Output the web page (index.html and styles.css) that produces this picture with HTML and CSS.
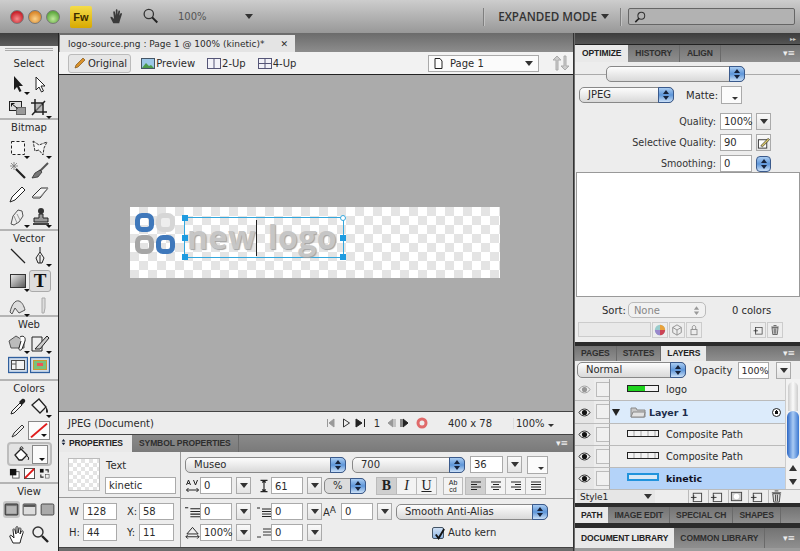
FILE: index.html
```html
<!DOCTYPE html>
<html lang="en">
  <head>
    <title>Fireworks - logo-source.png</title>
    <meta charset="UTF-8" />
    <link rel="stylesheet" href="styles.css">
  </head>
  <body>
    <svg class="defs" width="0" height="0">
      <symbol id="i-arrow" viewBox="0 0 20 20"><path d="M6 2v14l3-3 2.500 5 2-1-2.500-5H15z" fill="#1c1c1c"/></symbol>
      <symbol id="i-subsel" viewBox="0 0 20 20"><path d="M6 3v13l3-3 2.500 5 2-1-2.500-5H15z" fill="#fff" stroke="#222"/></symbol>
      <symbol id="i-scale" viewBox="0 0 20 20"><rect x="1.500" y="3.500" width="12" height="9" fill="#ddd" stroke="#222"/><rect x="8.500" y="9.500" width="9" height="7" fill="#999" stroke="#666"/><path d="M3.500 5.500l6 5M3.500 5.500h3M3.500 5.500v3" fill="none" stroke="#111"/></symbol>
      <symbol id="i-crop" viewBox="0 0 20 20"><path d="M5 1v13h12M1 5h12v12M2 17L15 3" fill="none" stroke="#222" stroke-width="1.500"/><rect x="6" y="6" width="6" height="7" fill="#999" opacity=".6"/></symbol>
      <symbol id="i-marquee" viewBox="0 0 20 20"><rect x="3.500" y="3.500" width="13" height="13" fill="#f6f6f6" stroke="#222" stroke-dasharray="3 2"/></symbol>
      <symbol id="i-lasso" viewBox="0 0 20 20"><path d="M3 3l6 4 8-3-3 6-1 7-4-5-4 1z" fill="#f6f6f6" stroke="#333" stroke-dasharray="3 1"/></symbol>
      <symbol id="i-wand" viewBox="0 0 20 20"><path d="M8 8l9 9" stroke="#222" stroke-width="2.200"/><path d="M6 1v8M2 5h8M3 2l6 6M9 2L3 8" stroke="#777" stroke-width=".8"/></symbol>
      <symbol id="i-brush" viewBox="0 0 20 20"><path d="M18 2L9 11" stroke="#555" stroke-width="2"/><path d="M10 9l2 2-4 5-6 1 3-5z" fill="#777" stroke="#222" stroke-width=".7"/></symbol>
      <symbol id="i-pencil" viewBox="0 0 20 20"><path d="M14 3l3 3-10 10-5 2 2-5z" fill="#fff" stroke="#222"/></symbol>
      <symbol id="i-eraser" viewBox="0 0 20 20"><path d="M2 13l9-9h7l-8 10H3z" fill="#f4f4f4" stroke="#333"/><path d="M2 13h8l8-9" fill="none" stroke="#888"/></symbol>
      <symbol id="i-blur" viewBox="0 0 20 20"><path d="M3 17l2-8 5-6 4 1 1 5-4 6-5 3z" fill="#eee" stroke="#555"/><path d="M6 9l3 7M9 7l3 6" stroke="#999"/></symbol>
      <symbol id="i-stamp" viewBox="0 0 20 20"><circle cx="11" cy="4" r="3" fill="#333"/><path d="M9 7h4v4h5v4H4v-4h5z" fill="#999" stroke="#222"/><rect x="3" y="16" width="16" height="2" fill="#444"/></symbol>
      <symbol id="i-line" viewBox="0 0 20 20"><path d="M3 3l14 14" stroke="#222" stroke-width="1.300"/></symbol>
      <symbol id="i-pen" viewBox="0 0 20 20"><path d="M10 1v5M10 6l4 6-2 5H8l-2-5z" fill="#eee" stroke="#222"/><path d="M10 9v8" stroke="#222"/></symbol>
      <symbol id="i-rect" viewBox="0 0 20 20"><defs><linearGradient id="g-rect" x1="0" y1="0" x2="1" y2="1"><stop offset="0" stop-color="#eee"/><stop offset="1" stop-color="#555"/></linearGradient></defs><rect x="2.500" y="3.500" width="15" height="13" fill="url(#g-rect)" stroke="#333"/></symbol>
      <symbol id="i-free" viewBox="0 0 20 20"><path d="M2 16c2-8 5-12 9-11 3 1 5 5 6 9l-6 3-4-5-3 6z" fill="#ddd" stroke="#555"/></symbol>
      <symbol id="i-knife" viewBox="0 0 20 20"><path d="M12 2h3v10l-1 5h-2z" fill="#ddd" stroke="#aaa"/></symbol>
      <symbol id="i-hotspot" viewBox="0 0 20 20"><path d="M1 8l7-5 8 5v7H3z" fill="#bbb" stroke="#555"/><path d="M12 4c3-2 6 0 5 4l-3 8c-1 2-4 1-3-1l2-7" fill="#fff" stroke="#222"/></symbol>
      <symbol id="i-slice" viewBox="0 0 20 20"><path d="M2 4h10v14H2z" fill="#eee" stroke="#222"/><path d="M5 16L17 3l2 2-9 11z" fill="#ccc" stroke="#222"/></symbol>
      <symbol id="i-hide" viewBox="0 0 20 20"><rect x=".5" y="2.500" width="19" height="15" fill="#cfdcec" stroke="#2f5f9e" stroke-width="1.300"/><rect x="3.500" y="5.500" width="13" height="9" fill="#f4f4f4" stroke="#444"/><path d="M3 9h5M8 6v8" stroke="#555"/></symbol>
      <symbol id="i-show" viewBox="0 0 20 20"><rect x=".5" y="2.500" width="19" height="15" fill="#cfdcec" stroke="#2f5f9e" stroke-width="1.300"/><rect x="3.500" y="5.500" width="13" height="9" fill="#7ac37a" stroke="#c93"/><rect x="7" y="8" width="6" height="3" fill="#e55"/></symbol>
      <symbol id="i-dropper" viewBox="0 0 20 20"><path d="M3 17l1-3 8-8 2 2-8 8z" fill="#f6f6f6" stroke="#222"/><path d="M11 5l3-3c2-1 4 1 3 3l-3 3z" fill="#222"/></symbol>
      <symbol id="i-bucket" viewBox="0 0 20 20"><path d="M2 8l7-6 7 8-6 6z" fill="#f4f4f4" stroke="#222" stroke-width="1.300"/><path d="M16 10c2 2 2 4 2 5s-2 1-2 0 0-3 0-5z" fill="#222"/></symbol>
      <symbol id="i-stroke-pen" viewBox="0 0 20 20"><path d="M14 4l2 2-8 8-4 2 2-4z" fill="#eee" stroke="#333"/></symbol>
      <symbol id="i-fillbucket" viewBox="0 0 20 20"><path d="M3 11l6-6 6 6-5 5H7z" fill="#fff" stroke="#222" stroke-width="1.300"/><path d="M8 5c0-3 3-3 3 0M15 12c2 1 2 3 1 4" fill="none" stroke="#222"/></symbol>
      <symbol id="i-screen" viewBox="0 0 20 20"><rect x="2.500" y="3.500" width="15" height="13" rx="1" fill="#777" stroke="#222"/><rect x="4" y="6" width="12" height="9" fill="#b5b5b5"/></symbol>
      <symbol id="i-screen2" viewBox="0 0 20 20"><rect x="2.500" y="3.500" width="15" height="13" rx="1" fill="#ddd" stroke="#333"/><rect x="3" y="4" width="14" height="3" fill="#555"/></symbol>
      <symbol id="i-screen3" viewBox="0 0 20 20"><rect x="2.500" y="3.500" width="15" height="13" rx="1.500" fill="#aaa" stroke="#333"/></symbol>
      <symbol id="i-hand" viewBox="0 0 20 20"><path d="M5 18l-3-6c-1-2 1-2 2-1l2 2-1-8c0-2 2-1 2 0l1 4V3c0-2 2-2 2 0v5l1-4c0-2 2-1 2 0l-1 5 1-2c1-2 3-1 2 1l-2 6-1 4z" fill="#fff" stroke="#222"/></symbol>
      <symbol id="i-zoom" viewBox="0 0 20 20"><circle cx="8" cy="7" r="5" fill="#eee" stroke="#333" stroke-width="1.400"/><path d="M12 11l6 6" stroke="#222" stroke-width="2.400"/></symbol>
      <symbol id="i-eye" viewBox="0 0 14 12"><path d="M1 6c3-5 9-5 12 0-3 5-9 5-12 0z" fill="#eee" stroke="#222"/><circle cx="7" cy="6" r="2.800" fill="#111"/></symbol>
      <symbol id="i-new" viewBox="0 0 16 14"><rect x="4.500" y="3.500" width="9" height="9" fill="#eee" stroke="#444"/><path d="M2 8h6M5 5.500v5" stroke="#333"/></symbol>
      <symbol id="i-bin" viewBox="0 0 16 14"><path d="M4 4h8l-1 9H5z" fill="#ddd" stroke="#444"/><path d="M3 3h10M6 1h4M7 5v7M9 5v7" stroke="#444"/></symbol>
      <symbol id="i-spin" viewBox="0 0 8 12"><path d="M4 1l3 4H1zM4 11L1 7h6z" fill="#16223a"/></symbol>
    </svg>

    <div class="window">
      <div class="titlebar">
        <div class="lights">
          <span class="light light-red"></span>
          <span class="light light-amber"></span>
          <span class="light light-green"></span>
        </div>
        <div class="fw-badge">Fw</div>
        <svg class="bar-hand" viewBox="0 0 20 20"><path d="M5 18l-3-6c-1-2 1-2 2-1l2 2-1-8c0-2 2-1 2 0l1 4V3c0-2 2-2 2 0v5l1-4c0-2 2-1 2 0l-1 5 1-2c1-2 3-1 2 1l-2 6-1 4z" fill="#3a3a3a"/></svg>
        <svg class="bar-zoom" viewBox="0 0 20 20"><circle cx="8" cy="7" r="5.500" fill="none" stroke="#333" stroke-width="1.500"/><path d="M12 11l6 6" stroke="#222" stroke-width="2.400"/></svg>
        <span class="bar-percent">100%</span>
        <span class="tri bar-tri"></span>
        <span class="bar-fill"></span>
        <span class="bar-sep"></span>
        <span class="mode">EXPANDED MODE</span>
        <span class="tri mode-tri"></span>
        <span class="bar-sep"></span>
        <div class="search">
          <svg class="search-glass" viewBox="0 0 14 14"><circle cx="8.500" cy="5.500" r="4" fill="none" stroke="#333" stroke-width="1.200"/><path d="M6 8.500L1.500 13" stroke="#222" stroke-width="1.800"/></svg>
        </div>
      </div>

      <div class="workspace">
        <div class="tools-col">
          <div class="tools-top"></div>
          <div class="tools">
            <div class="grip"></div>
            <div class="tool-group group-select">
              <div class="tool-title">Select</div>
              <div class="tool-row"><span class="tool more"><svg><use href="#i-arrow"/></svg></span><span class="tool"><svg><use href="#i-subsel"/></svg></span></div>
              <div class="tool-row"><span class="tool"><svg><use href="#i-scale"/></svg></span><span class="tool more"><svg><use href="#i-crop"/></svg></span></div>
            </div>
            <div class="tool-group group-bitmap">
              <div class="tool-title">Bitmap</div>
              <div class="tool-row"><span class="tool more"><svg><use href="#i-marquee"/></svg></span><span class="tool more"><svg><use href="#i-lasso"/></svg></span></div>
              <div class="tool-row"><span class="tool"><svg><use href="#i-wand"/></svg></span><span class="tool"><svg><use href="#i-brush"/></svg></span></div>
              <div class="tool-row"><span class="tool"><svg><use href="#i-pencil"/></svg></span><span class="tool"><svg><use href="#i-eraser"/></svg></span></div>
              <div class="tool-row"><span class="tool more"><svg><use href="#i-blur"/></svg></span><span class="tool more"><svg><use href="#i-stamp"/></svg></span></div>
            </div>
            <div class="tool-group group-vector">
              <div class="tool-title">Vector</div>
              <div class="tool-row"><span class="tool"><svg><use href="#i-line"/></svg></span><span class="tool more"><svg><use href="#i-pen"/></svg></span></div>
              <div class="tool-row"><span class="tool more"><svg><use href="#i-rect"/></svg></span><span class="tool tool-active"><span class="t-glyph">T</span></span></div>
              <div class="tool-row"><span class="tool more"><svg><use href="#i-free"/></svg></span><span class="tool"><svg><use href="#i-knife"/></svg></span></div>
            </div>
            <div class="tool-group group-web">
              <div class="tool-title">Web</div>
              <div class="tool-row"><span class="tool more"><svg><use href="#i-hotspot"/></svg></span><span class="tool more"><svg><use href="#i-slice"/></svg></span></div>
              <div class="tool-row"><span class="tool"><svg><use href="#i-hide"/></svg></span><span class="tool"><svg><use href="#i-show"/></svg></span></div>
            </div>
            <div class="tool-group group-colors">
              <div class="tool-title">Colors</div>
              <div class="tool-row"><span class="tool"><svg><use href="#i-dropper"/></svg></span><span class="tool more"><svg><use href="#i-bucket"/></svg></span></div>
              <div class="tool-row stroke-row">
                <span class="tool"><svg><use href="#i-stroke-pen"/></svg></span>
                <span class="colorwell well-stroke"><svg viewBox="0 0 20 20" preserveAspectRatio="none"><path d="M2 18L18 2" stroke="#e01c1c" stroke-width="2"/></svg></span>
              </div>
              <div class="fill-row">
                <span class="tool"><svg><use href="#i-fillbucket"/></svg></span>
                <span class="colorwell"></span>
              </div>
              <div class="mini-row">
                <svg viewBox="0 0 12 12"><rect x="4" y="4" width="7" height="7" fill="#fff" stroke="#555"/><rect x="1" y="1" width="7" height="7" fill="#111"/></svg>
                <svg viewBox="0 0 12 12"><rect x=".5" y=".5" width="11" height="11" fill="#fff" stroke="#444"/><path d="M1 11L11 1" stroke="#d11" stroke-width="2"/></svg>
                <svg viewBox="0 0 12 12"><rect x="1" y="1" width="4" height="4" fill="#111"/><rect x="7" y="7" width="4" height="4" fill="#eee" stroke="#444" stroke-width=".6"/><path d="M7 2h3v3M5 10H2V7" fill="none" stroke="#222" stroke-width="1.200"/></svg>
              </div>
            </div>
            <div class="tool-group group-view">
              <div class="tool-title">View</div>
              <div class="screen-row">
                <span class="screen screen-active"><svg><use href="#i-screen"/></svg></span>
                <span class="screen"><svg><use href="#i-screen2"/></svg></span>
                <span class="screen"><svg><use href="#i-screen3"/></svg></span>
              </div>
              <div class="tool-row"><span class="tool"><svg><use href="#i-hand"/></svg></span><span class="tool"><svg><use href="#i-zoom"/></svg></span></div>
            </div>
          </div>
        </div>

        <div class="center">
          <div class="doc-tabs">
            <div class="doc-tab">logo-source.png : Page 1 @ 100% (kinetic)* <span class="doc-close">✕</span></div>
          </div>
          <div class="doc-toolbar">
            <span class="view-btn view-active">
              <svg viewBox="0 0 14 14"><path d="M2 12l1-3 7-7 2 2-7 7z" fill="#d9912a" stroke="#80551a" stroke-width=".7"/></svg>Original
            </span>
            <span class="view-btn">
              <svg class="view-wide" viewBox="0 0 14 11"><rect x=".5" y=".5" width="13" height="10" fill="#9cc7e8" stroke="#456"/><path d="M1 10l4-5 3 3 2-1 3 3z" fill="#4c9a4c"/></svg>Preview
            </span>
            <span class="view-btn view-split">
              <svg class="view-wide" viewBox="0 0 14 11"><rect x=".5" y=".5" width="13" height="10" fill="#f2f2f8" stroke="#557"/><path d="M7 0v11" stroke="#557"/></svg>2-Up
            </span>
            <span class="view-btn view-split">
              <svg class="view-wide" viewBox="0 0 14 11"><rect x=".5" y=".5" width="13" height="10" fill="#f2f2f8" stroke="#557"/><path d="M7 0v11M0 5.500h14" stroke="#557"/></svg>4-Up
            </span>
            <span class="toolbar-fill"></span>
            <span class="page-select">
              <svg viewBox="0 0 9 11"><path d="M1 .5h5l2 2.500v7.500H1z" fill="#fff" stroke="#222"/></svg>
              <span class="page-name">Page 1</span>
              <span class="tri"></span>
            </span>
            <svg class="updown" viewBox="0 0 20 16"><path d="M5 15V5H2l4-4 4 4H7v10zM13 1v10h-3l4 4 4-4h-3V1z" fill="#ccc" stroke="#aaa"/></svg>
          </div>

          <div class="canvas">
            <div class="artboard">
              <div class="logo-mark">
                <span class="mark-blue"></span>
                <span class="mark-pale"></span>
                <span class="mark-grey"></span>
                <span class="mark-blue"></span>
              </div>
              <div class="text-block">
                <span class="logo-text">new logo</span>
                <span class="text-caret"></span>
                <span class="handle h-tl"></span>
                <span class="handle h-tr"></span>
                <span class="handle h-ml"></span>
                <span class="handle h-mr"></span>
                <span class="handle h-bl"></span>
                <span class="handle h-br"></span>
              </div>
            </div>
          </div>

          <div class="statusbar">
            <span class="status-name">JPEG (Document)</span>
            <span class="status-fill"></span>
            <svg class="player" viewBox="0 0 44 10">
              <path d="M.5 1v8M7 1L2 5l5 4z" fill="#999" stroke="#999"/>
              <path d="M16.500 1v8l6-4z" fill="none" stroke="#333"/>
              <path d="M29 1l6 4-6 4zM37.500 1v8" fill="#222" stroke="#222"/>
            </svg>
            <span class="status-frame">1</span>
            <svg class="player2" viewBox="0 0 44 14">
              <path d="M6 3L1 7l5 4zM8 3v8" fill="#999" stroke="#999"/>
              <path d="M14 3v8M16 3l5 4-5 4z" fill="#222" stroke="#222"/>
              <circle cx="35" cy="7" r="4" fill="none" stroke="#e06a6a" stroke-width="3"/>
            </svg>
            <span class="status-size">400 x 78</span>
            <span class="status-zoom">100% <span class="tri tri-small"></span></span>
          </div>

          <div class="props">
            <div class="tabrow props-tabs">
              <span class="tab tab-on"><svg class="props-grip"><use href="#i-spin"/></svg>PROPERTIES</span>
              <span class="tab">SYMBOL PROPERTIES</span>
              <span class="tab-fill"></span>
              <span class="tab-menu">▾≡</span>
            </div>
            <div class="props-body">
              <div class="props-left">
                <div class="props-top-left">
                  <div class="thumb-check"></div>
                  <div class="name-col">
                    <span class="label-text">Text</span>
                    <span class="field field-name">kinetic</span>
                  </div>
                </div>
                <div class="wh-grid">
                  <span class="wh-label">W</span><span class="field">128</span>
                  <span class="wh-label">X:</span><span class="field">58</span>
                  <span class="wh-label">H:</span><span class="field">44</span>
                  <span class="wh-label">Y:</span><span class="field">11</span>
                </div>
              </div>
              <div class="props-right">
                <div class="props-row">
                  <span class="select sel-font">Museo<span class="sel-arrows"><svg><use href="#i-spin"/></svg></span></span>
                  <span class="select sel-weight">700<span class="sel-arrows"><svg><use href="#i-spin"/></svg></span></span>
                  <span class="field field-size">36</span>
                  <span class="drop"><span class="tri"></span></span>
                  <span class="swatch"><span class="tri tri-small"></span></span>
                </div>
                <div class="props-row row-two">
                  <svg class="p-icon" viewBox="0 0 14 14"><path d="M1 6l2-5 2 5M2 4.500h2M8 1l2 5 2-5M1 11h12M1 11l2-2M1 11l2 2M13 11l-2-2M13 11l-2 2" fill="none" stroke="#222"/></svg>
                  <span class="field field-mid">0</span>
                  <span class="drop"><span class="tri"></span></span>
                  <svg class="p-icon p-gap" viewBox="0 0 14 16"><path d="M3 1.500h8M3 14.500h8M7 2v12M5 4l2-2 2 2M5 12l2 2 2-2" fill="none" stroke="#222" stroke-width="1.300"/></svg>
                  <span class="field field-mid field-low">61</span>
                  <span class="drop"><span class="tri"></span></span>
                  <span class="select sel-unit">%<span class="sel-arrows"><svg><use href="#i-spin"/></svg></span></span>
                  <span class="btn-group group-biu">
                    <span class="seg seg-on seg-b">B</span><span class="seg seg-i">I</span><span class="seg seg-u">U</span>
                  </span>
                  <span class="seg seg-ab"><span class="ab-top">Ab</span><span class="ab-bottom">cd</span></span>
                  <span class="btn-group group-align">
                    <span class="seg seg-on"><svg viewBox="0 0 12 10"><path d="M1 1h10M1 3.500h6M1 6h10M1 8.500h6" stroke="#222"/></svg></span>
                    <span class="seg"><svg viewBox="0 0 12 10"><path d="M1 1h10M3 3.500h6M1 6h10M3 8.500h6" stroke="#222"/></svg></span>
                    <span class="seg"><svg viewBox="0 0 12 10"><path d="M1 1h10M5 3.500h6M1 6h10M5 8.500h6" stroke="#222"/></svg></span>
                    <span class="seg"><svg viewBox="0 0 12 10"><path d="M1 1h10M1 3.500h10M1 6h10M1 8.500h10" stroke="#222"/></svg></span>
                  </span>
                </div>
                <div class="props-divider"></div>
                <div class="props-row row-three">
                  <svg class="p-icon" viewBox="0 0 14 12"><path d="M5 3h9M5 5.500h9M5 8h9M5 10.500h9M0 2h3" stroke="#222"/></svg>
                  <span class="field field-mid">0</span>
                  <span class="drop"><span class="tri"></span></span>
                  <svg class="p-icon p-gap" viewBox="0 0 14 12"><path d="M5 3h9M5 5.500h9M5 8h9M5 10.500h9M0 2h3" stroke="#222"/></svg>
                  <span class="field field-mid">0</span>
                  <span class="drop"><span class="tri"></span></span>
                  <span class="baseline-icon">A<span class="baseline-up">A</span></span>
                  <span class="field field-mid">0</span>
                  <span class="drop"><span class="tri"></span></span>
                  <span class="select sel-aa">Smooth Anti-Alias<span class="sel-arrows"><svg><use href="#i-spin"/></svg></span></span>
                </div>
                <div class="props-row row-four">
                  <svg class="p-icon" viewBox="0 0 16 14"><path d="M8 1L2 8h12zM1 11h14M1 11l2-2M1 11l2 2M15 11l-2-2M15 11l-2 2" fill="none" stroke="#222"/></svg>
                  <span class="field field-mid">100%</span>
                  <span class="drop"><span class="tri"></span></span>
                  <svg class="p-icon p-gap" viewBox="0 0 14 12"><path d="M6 2h8M6 5h8M6 8h8M0 10h4" stroke="#333"/></svg>
                  <span class="field field-mid">0</span>
                  <span class="drop"><span class="tri"></span></span>
                  <span class="check-wrap">
                    <span class="check"><svg viewBox="0 0 14 14"><path d="M3 7l3 4 6-10" fill="none" stroke="#111" stroke-width="2"/></svg></span>
                    <span class="check-label">Auto kern</span>
                  </span>
                </div>
              </div>
            </div>
          </div>
        </div>

        <div class="panels">
          <div class="panels-top"><span class="collapse">▸▸</span></div>
          <div class="tabrow">
            <span class="tab tab-on">OPTIMIZE</span>
            <span class="tab">HISTORY</span>
            <span class="tab">ALIGN</span>
            <span class="tab-fill"></span>
            <span class="tab-menu">▾≡</span>
          </div>
          <div class="optimize">
            <div class="opt-preset">
              <span class="select sel-preset"><span class="sel-arrows"><svg><use href="#i-spin"/></svg></span></span>
            </div>
            <div class="opt-format">
              <span class="select sel-format">JPEG<span class="sel-arrows"><svg><use href="#i-spin"/></svg></span></span>
              <span class="matte-label">Matte:</span>
              <span class="swatch"><span class="tri tri-small"></span></span>
            </div>
            <div class="opt-row"><span class="opt-label">Quality:</span><span class="field field-mid">100%</span><span class="drop"><span class="tri"></span></span></div>
            <div class="opt-row"><span class="opt-label">Selective Quality:</span><span class="field field-mid">90</span>
              <span class="drop"><svg viewBox="0 0 14 14"><rect x="1.500" y="3.500" width="9" height="9" fill="#fff" stroke="#333"/><path d="M4 10L12 2l1.500 1.500L6 11z" fill="#d9c76a" stroke="#222" stroke-width=".7"/></svg></span>
            </div>
            <div class="opt-row"><span class="opt-label">Smoothing:</span><span class="field field-mid">0</span><span class="spin-btn"><svg><use href="#i-spin"/></svg></span></div>
            <div class="palette"></div>
            <div class="sort-row">
              <span class="sort-label">Sort:</span>
              <span class="sort-select">None<svg viewBox="0 0 8 12"><path d="M4 1l3 4H1zM4 11L1 7h6z" fill="#999"/></svg></span>
              <span class="sort-count">0 colors</span>
            </div>
            <div class="palette-tools">
              <span class="palette-input"></span>
              <span class="pal-btn"><svg viewBox="0 0 14 14"><circle cx="7" cy="7" r="6" fill="#9cc"/><path d="M7 1a6 6 0 0 1 6 6H7z" fill="#e9a23b"/><path d="M7 7h6a6 6 0 0 1-6 6z" fill="#c45"/><path d="M7 7v6a6 6 0 0 1-6-6z" fill="#98c"/></svg></span>
              <span class="pal-btn"><svg viewBox="0 0 14 14"><path d="M7 1l5 3v6l-5 3-5-3V4zM2 4l5 3 5-3M7 7v6" fill="none" stroke="#888"/></svg></span>
              <span class="pal-btn"><svg viewBox="0 0 14 14"><rect x="3.500" y="6.500" width="7" height="6" fill="none" stroke="#888"/><path d="M5 6V4c0-3 4-3 4 0v2" fill="none" stroke="#888"/></svg></span>
              <span class="pal-fill"></span>
              <span class="pal-btn"><svg><use href="#i-new"/></svg></span>
              <span class="pal-btn"><svg><use href="#i-bin"/></svg></span>
            </div>
          </div>

          <div class="panel-gap"></div>
          <div class="tabrow tabrow-layers">
            <span class="tab tab-small">PAGES</span>
            <span class="tab tab-small">STATES</span>
            <span class="tab tab-small tab-on">LAYERS</span>
            <span class="tab-fill"></span>
            <span class="tab-menu">▾≡</span>
          </div>
          <div class="layers">
            <div class="layers-head">
              <span class="select sel-blend">Normal<span class="sel-arrows"><svg><use href="#i-spin"/></svg></span></span>
              <span class="opacity-label">Opacity</span>
              <span class="field field-opacity">100%</span>
              <span class="drop drop-opacity"><span class="tri"></span></span>
            </div>
            <div class="layer-area">
              <div class="layer-list">
                <div class="layer layer-logo">
                  <span class="layer-eye eye-dim"><svg><use href="#i-eye"/></svg></span>
                  <span class="layer-lock"></span>
                  <span class="layer-main"><span class="layer-thumb thumb-green"><span class="thumb-bar"></span></span><span class="layer-name">logo</span></span>
                </div>
                <div class="layer layer-group">
                  <span class="layer-eye"><svg><use href="#i-eye"/></svg></span>
                  <span class="layer-lock"></span>
                  <span class="layer-main">
                    <span class="folder-tri"></span>
                    <svg class="folder" viewBox="0 0 16 12"><path d="M1 11V2h5l1 2h8v7z" fill="#c8c8c8" stroke="#888"/><path d="M1 11l2-5h12l-1 5z" fill="#e2e2e2" stroke="#888"/></svg>
                    <span class="layer-name name-bold">Layer 1</span>
                    <span class="layer-target"></span>
                  </span>
                </div>
                <div class="layer">
                  <span class="layer-eye"><svg><use href="#i-eye"/></svg></span>
                  <span class="layer-lock"></span>
                  <span class="layer-main"><span class="layer-thumb thumb-path"></span><span class="layer-name">Composite Path</span></span>
                </div>
                <div class="layer">
                  <span class="layer-eye"><svg><use href="#i-eye"/></svg></span>
                  <span class="layer-lock"></span>
                  <span class="layer-main"><span class="layer-thumb thumb-path"></span><span class="layer-name">Composite Path</span></span>
                </div>
                <div class="layer layer-selected">
                  <span class="layer-eye"><svg><use href="#i-eye"/></svg></span>
                  <span class="layer-lock"></span>
                  <span class="layer-main"><span class="layer-thumb thumb-blue"></span><span class="layer-name name-bold">kinetic</span></span>
                </div>
              </div>
              <div class="scrollbar">
                <div class="scroll-cap"></div>
                <div class="scroll-thumb"></div>
                <div class="scroll-track"></div>
                <div class="scroll-arrow"><span class="arrow-up"></span></div>
                <div class="scroll-arrow"><span class="arrow-down"></span></div>
              </div>
            </div>
            <div class="layers-foot">
              <span class="style-select">Style1<span class="tri"></span></span>
              <span class="foot-fill"></span>
              <span class="foot-btn"><svg><use href="#i-new"/></svg></span>
              <span class="foot-btn"><svg><use href="#i-new"/></svg></span>
              <span class="foot-btn"><svg viewBox="0 0 16 14"><rect x="2.500" y="2.500" width="11" height="9" fill="#ccc" stroke="#444"/><circle cx="8" cy="7" r="3" fill="#fff"/></svg></span>
              <span class="foot-btn"><svg><use href="#i-new"/></svg></span>
              <span class="foot-btn"><svg><use href="#i-bin"/></svg></span>
            </div>
          </div>

          <div class="panel-gap"></div>
          <div class="tabrow tabrow-plain">
            <span class="tab tab-small tab-on">PATH</span>
            <span class="tab tab-small">IMAGE EDIT</span>
            <span class="tab tab-small">SPECIAL CH</span>
            <span class="tab tab-small">SHAPES</span>
            <span class="tab-fill"></span>
          </div>
          <div class="panel-gap gap-lib"></div>
          <div class="tabrow tabrow-lib">
            <span class="tab tab-on">DOCUMENT LIBRARY</span>
            <span class="tab">COMMON LIBRARY</span>
            <span class="tab-fill"></span>
            <span class="tab-menu">▾≡</span>
          </div>
          <div class="panels-end"></div>
        </div>
      </div>
    </div>
  </body>
</html>
```

FILE: styles.css
```css
* {
  box-sizing: border-box;
}

body {
  margin: 0;
  width: 800px;
  height: 551px;
  overflow: hidden;
  font-family: "DejaVu Sans", Verdana, sans-serif;
  font-size: 10px;
  color: #2b2b2b;
  background: #8a8a8a;
}

.defs {
  position: absolute;
}

svg {
  display: block;
}

.window {
  display: flex;
  flex-direction: column;
  height: 551px;
}

/* triangles used all over the app */
.tri {
  display: inline-block;
  width: 0;
  height: 0;
  border-top: 5px solid #333;
  border-left: 4px solid transparent;
  border-right: 4px solid transparent;
}

.tri-small {
  border-top-width: 3px;
  border-left-width: 3px;
  border-right-width: 3px;
}

/* title bar */
.titlebar {
  display: flex;
  align-items: center;
  height: 33px;
  padding: 0 5px 0 10px;
  background: linear-gradient(#cdcdcd, #989898);
  flex: none;
}

.lights {
  display: flex;
  gap: 4px;
}

.light {
  width: 14px;
  height: 14px;
  border-radius: 50%;
  border: 1px solid #777;
}

.light-red {
  background: radial-gradient(circle at 50% 65%, #f58a8a, #c8202a 70%);
}

.light-amber {
  background: radial-gradient(circle at 50% 65%, #fbd28a, #d9872a 70%);
}

.light-green {
  background: radial-gradient(circle at 50% 65%, #bfe89a, #5fa93f 70%);
}

.fw-badge {
  width: 22px;
  height: 22px;
  margin-left: 10px;
  border-radius: 2px;
  background: linear-gradient(#f4dc4a, #d8a900);
  color: #3a2c00;
  font-family: "Liberation Sans", Arial, sans-serif;
  font-size: 11px;
  font-weight: bold;
  line-height: 22px;
  text-align: center;
}

.bar-hand {
  width: 17px;
  height: 17px;
  margin-left: 17px;
}

.bar-zoom {
  width: 17px;
  height: 17px;
  margin-left: 16px;
}

.bar-percent {
  margin-left: 19px;
  color: #555;
}

.bar-tri {
  margin-left: 38px;
}

.bar-fill {
  flex: 1;
}

.bar-sep {
  width: 2px;
  height: 18px;
  background: #7f7f7f;
  border-right: 1px solid #c2c2c2;
}

.mode {
  margin-left: 13px;
  font-family: "Open Sans", sans-serif;
  font-size: 11.600px;
  font-weight: 600;
  color: #333;
}

.mode-tri {
  margin: 0 11px 0 4px;
}

.search {
  display: flex;
  align-items: center;
  width: 167px;
  height: 17px;
  margin-left: 6px;
  padding-left: 5px;
  border: 1px solid #666;
  border-radius: 2px;
  background: #b2b2b2;
}

.search-glass {
  width: 12px;
  height: 12px;
}

/* main columns */
.workspace {
  display: flex;
  flex: 1;
  min-height: 0;
  background: #6c6c6c;
}

.tools-col {
  display: flex;
  flex-direction: column;
  width: 59px;
  flex: none;
  border-right: 1px solid #222;
}

.tools-top {
  height: 13px;
  background: linear-gradient(#3f3f3f, #5c5c5c);
  flex: none;
}

.tools {
  flex: 1;
  background: #ededed;
}

.grip {
  height: 8px;
  margin: 0 5px;
  background: repeating-linear-gradient(#aaa 0 1px, #ededed 1px 2px) 0 2px / 100% 4px no-repeat;
}

.tool-group {
  border-bottom: 2px solid #b4b4b4;
}

.group-select {
  height: 66px;
  padding-top: 2px;
}

.group-bitmap {
  height: 111px;
}

.group-vector {
  height: 86px;
}

.group-web {
  height: 64px;
}

.group-colors {
  height: 103px;
}

.group-view {
  border-bottom: 0;
}

.tool-title {
  height: 15px;
  padding-top: 1px;
  font-size: 10px;
  line-height: 14px;
  text-align: center;
}

.tool-row {
  display: flex;
  justify-content: space-between;
  height: 24px;
  padding: 3px 8px 0 8px;
}

.group-bitmap .tool-row {
  height: 23px;
}

.group-vector .tool-title,
.group-web .tool-title,
.group-colors .tool-title {
  height: 13px;
}

.group-vector .tool-title {
  height: 12px;
}

.group-vector .tool-row {
  height: 25px;
}

.group-web .tool-row {
  height: 22px;
}

.tool {
  position: relative;
  display: block;
  width: 20px;
  height: 20px;
}

.tool svg {
  width: 20px;
  height: 20px;
}

.tool.more::after {
  content: "";
  position: absolute;
  right: -2px;
  bottom: -1px;
  border-top: 3px solid #111;
  border-left: 3px solid transparent;
  border-right: 3px solid transparent;
}

.tool-active {
  width: 22px;
  height: 22px;
  margin: -1px -1px 0 0;
  border: 1px solid #aaa;
  border-radius: 3px;
  background: #dedede;
  text-align: center;
}

.t-glyph {
  font-family: "Liberation Serif", serif;
  font-size: 19px;
  font-weight: bold;
  line-height: 20px;
  color: #111;
}

.stroke-row {
  padding-right: 9px;
}

.colorwell {
  position: relative;
  width: 22px;
  height: 19px;
  border: 1px solid #888;
  background: #fbfbfb;
}

.colorwell svg {
  width: 20px;
  height: 17px;
}

.colorwell::after {
  content: "";
  position: absolute;
  right: 2px;
  bottom: 2px;
  border-top: 3px solid #111;
  border-left: 3px solid transparent;
  border-right: 3px solid transparent;
}

.fill-row {
  display: flex;
  align-items: center;
  justify-content: space-between;
  height: 24px;
  margin: 0 6px 0 7px;
  padding: 0 2px 0 3px;
  border: 2px solid #bdbdbd;
  border-radius: 4px;
  background: #e3e3e3;
}

.mini-row {
  display: flex;
  justify-content: center;
  gap: 4px;
  margin-top: 2px;
}

.mini-row svg {
  width: 11px;
  height: 11px;
}

.screen-row {
  display: flex;
  justify-content: center;
  gap: 1px;
  height: 21px;
  margin-top: 2px;
}

.screen {
  width: 17px;
  height: 17px;
}

.screen svg {
  width: 17px;
  height: 17px;
}

.screen-active {
  border-radius: 3px;
  background: #c6c6c6;
}

/* document area */
.center {
  display: flex;
  flex-direction: column;
  flex: 1;
  min-width: 0;
  border-right: 1px solid #333;
}

.doc-tabs {
  height: 19px;
  padding: 2px 0 0 1px;
  background: linear-gradient(#6b6b6b, #8d8d8d);
  flex: none;
}

.doc-tab {
  display: flex;
  align-items: center;
  width: 235px;
  height: 17px;
  padding-left: 8px;
  background: #e4e4e4;
  font-size: 9px;
  white-space: nowrap;
}

.doc-close {
  margin-left: 16px;
  font-size: 9px;
}

.doc-toolbar {
  display: flex;
  align-items: center;
  height: 23px;
  padding: 0 2px 0 9px;
  background: #f2f2f2;
  border-bottom: 1px solid #222;
  flex: none;
}

.view-btn {
  display: flex;
  align-items: center;
  height: 19px;
  margin-right: 7px;
  padding: 0 3px 0 2px;
  font-size: 10px;
}

.view-btn svg {
  width: 14px;
  height: 14px;
  margin-right: 1px;
}

.view-btn .view-wide {
  width: 14px;
  height: 11px;
}

.view-split {
  margin-right: 7px;
}

.view-active {
  padding: 0 3px 0 4px;
  margin-right: 8px;
  border: 1px solid #bbb;
  border-radius: 3px;
  background: #e6e6e6;
}

.toolbar-fill {
  flex: 1;
}

.page-select {
  display: flex;
  align-items: center;
  width: 111px;
  height: 17px;
  padding: 0 5px;
  border: 1px solid #aaa;
  background: #fbfbfb;
  font-size: 10px;
}

.page-select svg {
  width: 9px;
  height: 11px;
}

.page-name {
  flex: 1;
  margin-left: 7px;
}

.updown {
  width: 20px;
  height: 16px;
  margin-left: 12px;
}

.canvas {
  display: flex;
  align-items: center;
  justify-content: center;
  flex: 1;
  min-height: 0;
  background: #ababab;
  border-bottom: 1px solid #444;
}

.artboard {
  position: relative;
  width: 370px;
  height: 71px;
  margin: 0 2px 1px 0;
  background: repeating-conic-gradient(#e4e4e4 0 25%, #fff 0 50%) 0 0 / 18px 18px;
}

.logo-mark {
  position: absolute;
  left: 5px;
  top: 6px;
  display: grid;
  grid-template-columns: 19px 19px;
  grid-auto-rows: 19px;
  gap: 3px 2px;
}

.logo-mark span {
  border-radius: 7px;
}

.mark-blue {
  border: 5px solid #3f78bb;
}

.mark-pale {
  border: 5px solid #d6d6d6;
  background: #eee;
}

.mark-grey {
  border: 5px solid #a6a6a6;
}

.text-block {
  position: absolute;
  left: 54px;
  top: 10px;
  width: 160px;
  height: 41px;
  border: 1px solid #34a7dd;
}

.logo-text {
  display: block;
  padding-left: 2px;
  font-family: "Open Sans", sans-serif;
  font-size: 32px;
  font-weight: bold;
  line-height: 38px;
  letter-spacing: .5px;
  word-spacing: 3px;
  white-space: nowrap;
  color: #c6c6c6;
  text-shadow: 1px 1px 1px #a2a2a2;
}

.text-caret {
  position: absolute;
  left: 71px;
  top: 2px;
  width: 1px;
  height: 36px;
  background: #222;
}

.handle {
  position: absolute;
  width: 6px;
  height: 6px;
  background: #1f9be0;
}

.h-tl {
  left: -3px;
  top: -3px;
}

.h-tr {
  right: -3px;
  top: -3px;
  border: 1px solid #34a7dd;
  border-radius: 50%;
  background: #fff;
}

.h-ml {
  left: -3px;
  top: 17px;
}

.h-mr {
  right: -3px;
  top: 17px;
}

.h-bl {
  left: -3px;
  bottom: -3px;
}

.h-br {
  right: -3px;
  bottom: -3px;
}

.statusbar {
  display: flex;
  align-items: center;
  height: 23px;
  padding-left: 9px;
  background: #ededed;
  border-bottom: 1px solid #444;
  flex: none;
}

.status-fill {
  flex: 1;
}

.player {
  width: 44px;
  height: 10px;
}

.status-frame {
  margin: 0 7px 0 3px;
}

.player2 {
  width: 44px;
  height: 14px;
}

.status-size {
  margin-left: 17px;
  width: 65px;
}

.status-zoom {
  width: 56px;
  margin-right: 4px;
  padding-left: 2px;
  border-left: 1px solid #ddd;
}

/* tabs */
.tabrow {
  display: flex;
  height: 17px;
  background: linear-gradient(#737373, #8f8f8f);
  flex: none;
}

.tab {
  padding: 0 7px;
  border-right: 1px solid #6a6a6a;
  font-family: "Liberation Sans", Arial, sans-serif;
  font-size: 8.500px;
  font-weight: bold;
  line-height: 17px;
  letter-spacing: -.1px;
  color: #2e2e2e;
  white-space: nowrap;
}

.tab-small {
  padding: 0 6px;
}

.tab-on {
  background: #e9e9e9;
  border-right: 0;
  color: #222;
}

.tab-fill {
  flex: 1;
}

.tab-menu {
  padding-right: 5px;
  font-size: 9px;
  line-height: 17px;
  color: #eee;
}

.props {
  display: flex;
  flex-direction: column;
  height: 116px;
  flex: none;
}

.props-tabs {
  background: linear-gradient(#8a8a8a, #7a7a7a);
}

.props-grip {
  display: inline-block;
  width: 5px;
  height: 8px;
  margin-right: 3px;
}

.props-tabs .tab-on {
  padding-left: 2px;
  width: 73px;
}

.props-body {
  display: flex;
  height: 96px;
  background: #ededed;
  border-bottom: 1px solid #444;
}

.props-left {
  width: 122px;
  border-right: 1px solid #999;
  flex: none;
}

.props-top-left {
  display: flex;
  height: 46px;
  padding: 6px 0 0 9px;
  border-bottom: 1px solid #999;
}

.thumb-check {
  width: 32px;
  height: 33px;
  border: 1px solid #bbb;
  background: repeating-conic-gradient(#e4e4e4 0 25%, #fff 0 50%) 0 0 / 8px 8px;
}

.name-col {
  display: flex;
  flex-direction: column;
  margin-left: 5px;
}

.label-text {
  height: 19px;
  padding-left: 1px;
  line-height: 15px;
}

.field {
  display: block;
  height: 17px;
  padding-left: 3px;
  border: 1px solid #aaa;
  background: #fff;
  font-size: 10px;
  line-height: 16px;
}

.field-name {
  width: 71px;
}

.wh-grid {
  display: grid;
  grid-template-columns: 14px 34px 22px 35px;
  grid-auto-rows: 17px;
  row-gap: 4px;
  padding: 5px 0 0 10px;
}

.wh-label {
  line-height: 17px;
}

.wh-grid .wh-label:nth-child(4n+3) {
  padding-left: 10px;
}

.props-right {
  flex: 1;
  min-width: 0;
  padding: 4px 0 0 4px;
}

.props-row {
  display: flex;
  align-items: center;
  height: 17px;
}

.row-two {
  margin-top: 4px;
}

.props-divider {
  height: 1px;
  margin: 4px 0 4px -4px;
  background: #999;
}

.row-four {
  margin-top: 4px;
}

.select {
  position: relative;
  display: block;
  height: 16px;
  padding-left: 8px;
  border: 1px solid #888;
  border-radius: 5px;
  background: linear-gradient(#fdfdfd, #d9d9d9);
  font-size: 10px;
  line-height: 14px;
  white-space: nowrap;
  flex: none;
}

.sel-arrows {
  position: absolute;
  right: -1px;
  top: -1px;
  width: 16px;
  height: 16px;
  border: 1px solid #3a5a8c;
  border-radius: 0 5px 5px 0;
  background: linear-gradient(#a9ccf2, #5d95d8 50%, #cbe0f7);
}

.sel-arrows svg {
  width: 8px;
  height: 12px;
  margin: 1px 0 0 3px;
}

.sel-font {
  width: 161px;
}

.sel-weight {
  width: 113px;
  margin-left: 6px;
}

.field-size {
  width: 33px;
  margin-left: 5px;
}

.drop {
  display: flex;
  align-items: center;
  justify-content: center;
  width: 15px;
  height: 17px;
  margin-left: 4px;
  border: 1px solid #aaa;
  background: linear-gradient(#fafafa, #e3e3e3);
  flex: none;
}

.drop svg {
  width: 14px;
  height: 14px;
}

.swatch {
  display: flex;
  align-items: flex-end;
  justify-content: flex-end;
  width: 21px;
  height: 18px;
  margin-left: 5px;
  padding: 0 3px 3px 0;
  border: 1px solid #aaa;
  background: #fbfbfb;
  flex: none;
}

.p-icon {
  width: 15px;
  height: 14px;
  flex: none;
}

.p-gap {
  width: 14px;
  margin-left: 6px;
}

.field-mid {
  width: 32px;
  flex: none;
}

.field-low {
  line-height: 18px;
}

.sel-unit {
  width: 42px;
  margin-left: 2px;
  background: #dcdcdc;
}

.btn-group {
  display: flex;
  flex: none;
}

.group-biu {
  margin-left: 11px;
}

.group-align {
  margin-left: 3px;
}

.seg {
  display: flex;
  align-items: center;
  justify-content: center;
  width: 21px;
  height: 18px;
  border: 1px solid #bbb;
  margin-left: -1px;
  background: #f3f3f3;
  font-family: "Liberation Serif", serif;
  font-size: 14px;
  color: #222;
  flex: none;
}

.seg svg {
  width: 12px;
  height: 10px;
}

.seg-on {
  background: #cfcfcf;
}

.seg-b {
  font-weight: bold;
}

.seg-i {
  font-style: italic;
}

.seg-u {
  text-decoration: underline;
}

.seg-ab {
  flex-direction: column;
  width: 20px;
  margin-left: 6px;
  font-family: "Liberation Sans", Arial, sans-serif;
  font-size: 7px;
  line-height: 7px;
}

.baseline-icon {
  width: 18px;
  margin-left: 1px;
  font-size: 10px;
  flex: none;
}

.baseline-up {
  font-size: 9px;
  vertical-align: 3px;
}

.sel-aa {
  width: 152px;
  margin-left: 4px;
}

.check-wrap {
  display: flex;
  align-items: center;
  margin-left: 110px;
}

.check {
  width: 12px;
  height: 12px;
  border: 1px solid #456;
  border-radius: 2px;
  background: linear-gradient(#cfe0f4, #8fb6e4);
}

.check svg {
  width: 13px;
  height: 13px;
}

.check-label {
  margin-left: 4px;
}

/* right hand panels */
.panels {
  display: flex;
  flex-direction: column;
  width: 225px;
  flex: none;
  margin-left: 1px;
  background: #ededed;
}

.panels-top {
  height: 12px;
  padding-right: 4px;
  background: linear-gradient(#3c3c3c, #555);
  border-bottom: 1px solid #222;
  color: #ccc;
  font-size: 6px;
  line-height: 11px;
  text-align: right;
  flex: none;
}

.optimize {
  display: flex;
  flex-direction: column;
  height: 280px;
  background: #ededed;
  flex: none;
}

.opt-preset {
  display: flex;
  height: 23px;
  padding: 4px 0 0 31px;
  background: linear-gradient(#aaa, #aaa) 0 12px / 100% 1px no-repeat;
}

.sel-preset {
  width: 139px;
}

.opt-format {
  display: flex;
  align-items: center;
  height: 20px;
  padding-left: 4px;
  margin-bottom: 8px;
}

.sel-format {
  width: 95px;
}

.matte-label {
  margin-left: 12px;
}

.opt-format .swatch {
  margin-left: 3px;
}

.opt-row {
  display: flex;
  align-items: center;
  justify-content: flex-end;
  height: 17px;
  margin-bottom: 4px;
  padding-right: 29px;
}

.opt-label {
  margin-right: 4px;
  font-size: 9.600px;
  color: #333;
}

.spin-btn {
  width: 15px;
  height: 16px;
  margin-left: 4px;
  border: 1px solid #3a5a8c;
  border-radius: 4px;
  background: linear-gradient(#a9ccf2, #5d95d8 50%, #cbe0f7);
  flex: none;
}

.spin-btn svg {
  width: 8px;
  height: 12px;
  margin: 1px 0 0 3px;
}

.palette {
  height: 125px;
  margin: -4px 0 0 1px;
  border: 1px solid #999;
  background: #fff;
  flex: none;
}

.sort-row {
  display: flex;
  align-items: center;
  height: 20px;
  margin-top: 3px;
}

.sort-label {
  margin-left: 27px;
}

.sort-select {
  display: flex;
  align-items: center;
  justify-content: space-between;
  width: 78px;
  height: 16px;
  margin-left: 2px;
  padding: 0 5px;
  border: 1px solid #bbb;
  border-radius: 5px;
  background: #f1f1f1;
  color: #888;
}

.sort-select svg {
  width: 7px;
  height: 11px;
}

.sort-count {
  margin-left: 26px;
}

.palette-tools {
  display: flex;
  align-items: center;
  gap: 1px;
  height: 19px;
  padding: 0 17px 0 3px;
}

.palette-input {
  width: 73px;
  height: 15px;
  border: 1px solid #ccc;
  background: #e9e9e9;
}

.pal-btn {
  width: 16px;
  height: 16px;
  padding: 1px;
  border: 1px solid #ccc;
}

.pal-btn svg {
  width: 12px;
  height: 12px;
}

.pal-fill {
  flex: 1;
}

.panel-gap {
  height: 4px;
  background: #2b2b2b;
  flex: none;
}

.gap-lib {
  height: 5px;
}

.tabrow-layers {
  height: 15px;
}

.tabrow-layers .tab,
.tabrow-layers .tab-menu {
  line-height: 15px;
}

.layers {
  display: flex;
  flex-direction: column;
  flex: none;
  height: 142px;
}

.layers-head {
  display: flex;
  align-items: center;
  height: 18px;
  padding-left: 2px;
}

.sel-blend {
  width: 109px;
}

.opacity-label {
  margin-left: 8px;
  color: #333;
}

.field-opacity {
  width: 31px;
  margin-left: 6px;
  padding-left: 2px;
  font-size: 9.500px;
}

.drop-opacity {
  margin-left: 7px;
}

.layer-area {
  display: flex;
  height: 110px;
}

.layer-list {
  flex: 1;
}

.layer {
  display: flex;
  height: 22px;
  border-bottom: 1px solid #bbb;
  background: #ededed;
}

.layer-eye {
  display: flex;
  align-items: center;
  justify-content: center;
  width: 19px;
  background: #e5e5e5;
}

.layer-eye svg {
  width: 13px;
  height: 11px;
}

.eye-dim {
  opacity: .4;
}

.layer-lock {
  display: block;
  width: 16px;
  padding: 0;
  background: linear-gradient(#bbb, #bbb) 2px 3px / 13px 15px no-repeat, #ededed;
  position: relative;
  border-right: 1px solid #aaa;
}

.layer-lock::after {
  content: "";
  position: absolute;
  left: 3px;
  top: 4px;
  width: 12px;
  height: 13px;
  background: #f0f0f0;
}

.layer-main {
  display: flex;
  align-items: center;
  flex: 1;
  padding-left: 17px;
}

.layer-thumb {
  width: 32px;
  height: 7px;
  margin-bottom: 3px;
  border: 1px solid #222;
  background: #f2f2f2;
  flex: none;
}

.thumb-path {
  background: repeating-linear-gradient(90deg, #f2f2f2 0 5px, #ccc 5px 7px);
}

.thumb-bar {
  display: block;
  width: 17px;
  height: 5px;
  background: #1fd41f;
}

.thumb-blue {
  height: 8px;
  border: 2px solid #2193dc;
  background: #d9e8f6;
}

.layer-name {
  margin-left: 7px;
  font-size: 9.800px;
  color: #2a2a2a;
}

.name-bold {
  font-size: 9.500px;
  font-weight: bold;
}

.layer-group {
  height: 23px;
  background: #dcebfb;
}

.layer-group .layer-main {
  padding-left: 2px;
  background: #dcebfb;
}

.layer-group .layer-name {
  margin-left: 3px;
  color: #1d2d4a;
}

.folder-tri {
  width: 0;
  height: 0;
  border-top: 7px solid #222;
  border-left: 4px solid transparent;
  border-right: 4px solid transparent;
  margin-right: 10px;
}

.folder {
  width: 16px;
  height: 12px;
}

.layer-target {
  width: 9px;
  height: 9px;
  margin-left: auto;
  margin-right: 4px;
  border: 1px solid #222;
  border-radius: 50%;
  background: radial-gradient(circle, #111 2px, #fff 2px);
}

.layer-selected,
.layer-selected .layer-main {
  background: #b4d3f9;
}

.layer-selected .layer-name {
  color: #112;
}

.scrollbar {
  display: flex;
  flex-direction: column;
  width: 15px;
  flex: none;
  background: #f2f2f2;
  border-left: 1px solid #ccc;
}

.scroll-cap {
  height: 29px;
  margin: 3px 2px 0 2px;
  border-radius: 6px 6px 0 0;
  background: linear-gradient(90deg, #ccc, #fafafa, #ccc);
}

.scroll-thumb {
  height: 48px;
  margin: 0 1px 0 1px;
  border-radius: 6px;
  background: linear-gradient(90deg, #2b66c4, #a9cbf4 50%, #3a77d0);
}

.scroll-track {
  flex: 1;
}

.scroll-arrow {
  display: flex;
  align-items: center;
  justify-content: center;
  height: 14px;
}

.arrow-up {
  border-bottom: 6px solid #333;
  border-left: 4px solid transparent;
  border-right: 4px solid transparent;
}

.arrow-down {
  border-top: 6px solid #333;
  border-left: 4px solid transparent;
  border-right: 4px solid transparent;
}

.layers-foot {
  display: flex;
  align-items: center;
  height: 14px;
  padding: 0 15px 0 2px;
  border-top: 1px solid #bbb;
}

.style-select {
  display: flex;
  align-items: center;
  justify-content: space-between;
  width: 78px;
  height: 13px;
  padding: 0 3px;
  font-size: 9px;
  color: #222;
  background: #e6e6e6;
}

.foot-fill {
  flex: 1;
}

.foot-btn {
  width: 17px;
  height: 13px;
  margin-left: 3px;
  border-left: 1px solid #bbb;
}

.foot-btn svg {
  width: 15px;
  height: 13px;
}

.tabrow-plain {
  height: 16px;
}

.tabrow-plain .tab {
  line-height: 16px;
}

.tabrow-lib {
  height: 20px;
}

.tabrow-lib .tab {
  line-height: 20px;
  padding: 0 6px;
}

.tabrow-lib .tab-menu {
  line-height: 20px;
}

.panels-end {
  flex: 1;
  background: #9c9c9c;
}
```
